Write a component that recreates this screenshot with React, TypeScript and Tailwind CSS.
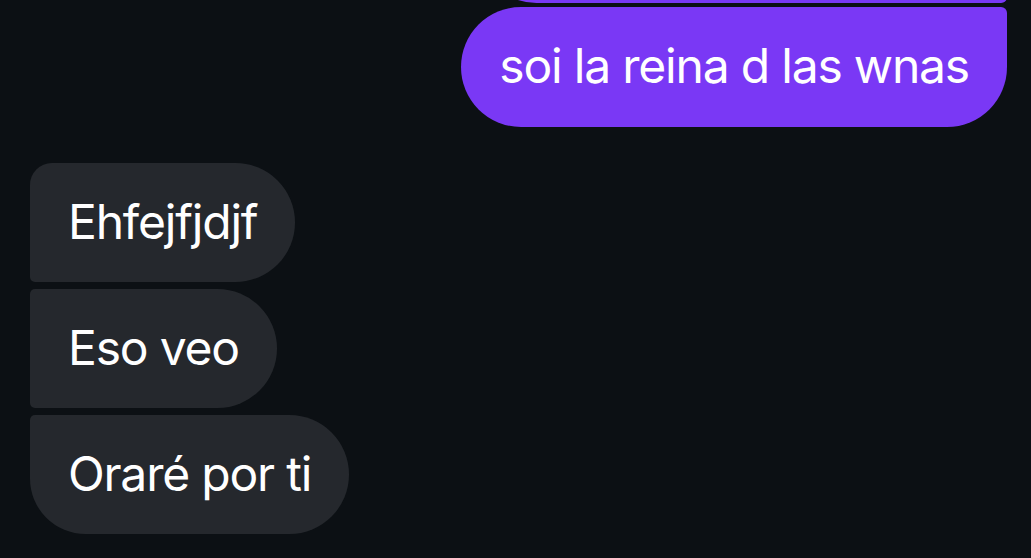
import React from "react";

export default function App() {
  return (
    <div
      className="w-[1031px] h-[558px] overflow-hidden bg-[#0c1014] text-white"
      style={{ fontFamily: "Inter, 'Noto Sans', sans-serif" }}
    >
      <div className="flex flex-col items-end pr-[24px]">
        <div className="mt-[-116px] h-[119px] w-[530px] rounded-l-[60px] rounded-tr-[60px] rounded-br-[6px] bg-[#7a38f5]" />
        <div className="mt-[4px] flex h-[120px] items-center rounded-l-[60px] rounded-br-[60px] rounded-tr-[6px] bg-[#7a38f5] px-[38px] pb-[2px] text-[48px] tracking-[-0.025em] leading-none">
          soi la reina d las wnas
        </div>
      </div>
      <div className="mt-[36px] flex flex-col items-start gap-[7px] pl-[30px]">
        <div className="flex h-[119px] items-center rounded-r-[60px] rounded-tl-[22px] rounded-bl-[5px] bg-[#25282d] px-[38px] pb-[2px] text-[48px] tracking-[-0.025em] leading-none">
          Ehfejfjdjf
        </div>
        <div className="flex h-[119px] items-center rounded-r-[60px] rounded-l-[5px] bg-[#25282d] px-[38px] pb-[2px] text-[48px] tracking-[-0.025em] leading-none">
          Eso veo
        </div>
        <div className="flex h-[119px] items-center rounded-r-[60px] rounded-tl-[5px] rounded-bl-[56px] bg-[#25282d] px-[38px] pb-[2px] text-[48px] tracking-[-0.025em] leading-none">
          Oraré por ti
        </div>
      </div>
    </div>
  );
}
